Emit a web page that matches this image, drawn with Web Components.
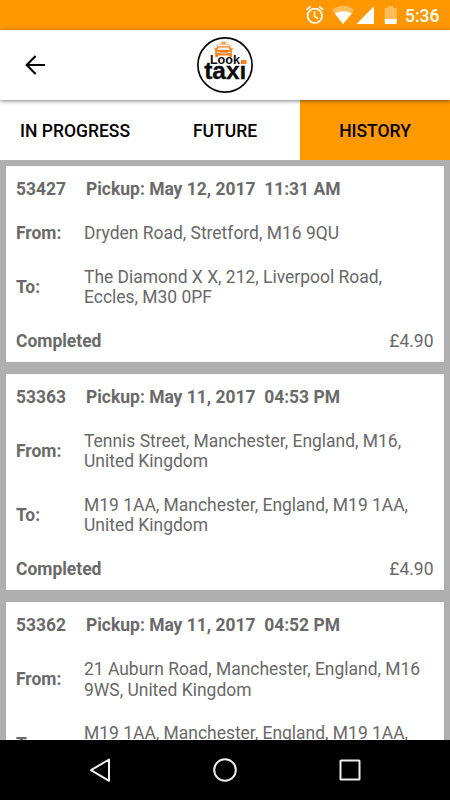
<!DOCTYPE html>
<html lang="en">
<head>
<meta charset="utf-8">
<title>Look Taxi – History</title>
<style>
html, body { margin: 0; height: 100%; }
body { font-family: Roboto, "Liberation Sans", sans-serif; overflow: hidden; background: #000; }
</style>
</head>
<body>
<taxi-app></taxi-app>
<script>
function define(name, html) {
  const t = document.createElement('template');
  t.innerHTML = html;
  customElements.define(name, class extends HTMLElement {
    constructor() {
      super();
      this.attachShadow({ mode: 'open' }).append(t.content.cloneNode(true));
    }
  });
}

define('status-bar', `
<style>
:host { display: flex; height: 30px; background: #ff9800; color: #fff; align-items: center; justify-content: flex-end; padding-right: 10px; box-sizing: border-box; }
svg { display: block; width: 102px; height: 30px; }
span { font-size: 17.5px; font-weight: 500; line-height: 30px; padding-top: 1px; width: 35px; height: 30px; box-sizing: border-box; white-space: nowrap; }
</style>
<svg viewBox="303 0 102 30" fill="#fff">
  <g fill="none" stroke="#fff" stroke-width="1.7">
    <circle cx="314.8" cy="15.8" r="7.2"/>
    <path d="M306.4 9.9l4-3.3M323.2 9.9l-4-3.3"/>
    <path d="M314.5 11.5v4.8l3.6 2.3" stroke-width="1.5"/>
  </g>
  <path d="M343 24L332 10q11-8.400 22.300 0z" opacity=".35"/>
  <path d="M343 24L334.800 13.500q8.300-4.500 16.900 0z"/>
  <path d="M356.500 24L374 6.200V24z"/>
  <path d="M384.700 19V8.700q0-1 1-1h2.300V6h5.300v1.700h2.400q1 0 1 1V19z" opacity=".35"/>
  <path d="M384.700 19h12v4q0 1-1 1h-10q-1 0-1-1z"/>
</svg>
<span>5:36</span>`);

define('taxi-logo', `
<style>
:host { display: block; width: 56px; height: 56px; }
svg { display: block; }
text { font-family: "Liberation Sans", Arial, sans-serif; font-weight: bold; fill: #0a0a0a; }
</style>
<svg width="56" height="56" viewBox="197 37 56 56">
  <circle cx="225" cy="65" r="27.100" fill="#fff" stroke="#0a0a0a" stroke-width="1.700"/>
  <path d="M215.800 46.200q3-2 5.400-2h5q2.400 0 5.400 2" fill="none" stroke="#f9a15a" stroke-width=".8"/>
  <path d="M220.200 42.200l1.600 1.300M225.600 43.500l1.600-1.300M222.500 42h2.600v1.800h-2.600z" fill="#f9a15a" stroke="#f98a30" stroke-width=".7"/>
  <path fill="#f9801d" d="M214.300 48.200h2l1-1.900h12.600l1 1.900h2v1l-1 .8v7h-2.600v-1.500h-11.200v1.500h-2.900V50l-.9-.8z"/>
  <path d="M217.300 49.800l1.200-2.200h10.200l1.200 2.200z" fill="#fff"/>
  <path d="M216.800 51.700h2.700v1.200h-2.700zM228 51.700h2.700v1.200H228zM220.300 52.700h7v.8h-7z" fill="#fff"/>
  <text x="209.900" y="64.200" font-size="12.600">Look</text>
  <text x="204.200" y="79" font-size="24.500" stroke="#0a0a0a" stroke-width=".3">taxi</text>
  <rect x="241.200" y="60" width="5.200" height="4" fill="#f9801d"/>
</svg>`);

define('app-bar', `
<style>
:host { display: grid; grid-template-columns: 1fr auto 1fr; align-items: center; height: 70px; background: #fff; box-shadow: 0 1px 4px rgba(0,0,0,.5); position: relative; z-index: 1; }
svg { display: block; margin-left: 24px; }
</style>
<svg width="22" height="22" viewBox="24 54 22 22" fill="none" stroke="#000" stroke-width="2.100"><path d="M45 65H27.500M35.600 56.100L26.700 65L35.600 73.900"/></svg>
<taxi-logo></taxi-logo>`);

define('tab-item', `
<style>
:host { display: flex; align-items: center; justify-content: center; background: #fff; color: #000; font-size: 17.500px; font-weight: 500; padding-top: 1px; }
:host([selected]) { background: #ff9900; }
</style>
<span><slot></slot></span>`);

define('tab-bar', `
<style>:host { display: grid; grid-template-columns: repeat(3, 1fr); height: 60px; }</style>
<slot></slot>`);

define('booking-card', `
<style>
:host { display: flex; flex-direction: column; gap: 23.300px; padding: 12.800px 10.500px 10.500px 10px; background: #fff; color: #686868; font-size: 17.470px; line-height: 20.500px; box-shadow: 0 0 1px rgba(0,0,0,.15); }
.row { display: grid; grid-template-columns: 68px 1fr; align-items: center; }
.head { display: flex; }
.id { width: 70px; }
.foot { display: flex; justify-content: space-between; }
b, .head { font-weight: 700; color: #6a6a6a; white-space: pre; }
</style>
<div class="head"><span class="id"><slot name="id"></slot></span><span><slot name="pickup"></slot></span></div>
<div class="row"><b>From:</b><span><slot name="from"></slot></span></div>
<div class="row"><b>To:</b><span><slot name="to"></slot></span></div>
<div class="foot"><b>Completed</b><span><slot name="fare"></slot></span></div>`);

define('booking-list', `
<style>
:host { display: flex; flex-direction: column; gap: 12.200px; padding: 6.200px 6px 0; background: #afafaf; flex: 1; min-height: 0; overflow: hidden; }
::slotted(*) { flex: none; }
</style>
<slot></slot>`);

define('nav-bar', `
<style>
:host { display: block; height: 60px; background: #000; }
svg { display: block; }
</style>
<svg width="450" height="60" viewBox="0 740 450 60" fill="none" stroke="#eee" stroke-width="2" stroke-linejoin="round">
  <path d="M109 759.500V780.800L91 770.200z"/>
  <circle cx="225" cy="770" r="10.800"/>
  <rect x="340.500" y="760.500" width="19" height="19" rx=".5"/>
</svg>`);

define('taxi-app', `
<style>
:host { display: flex; flex-direction: column; width: 450px; height: 800px; }
status-bar, app-bar, tab-bar, nav-bar { flex: none; }
.pre { white-space: pre; }
</style>
<status-bar></status-bar>
<app-bar></app-bar>
<tab-bar><tab-item>IN PROGRESS</tab-item><tab-item>FUTURE</tab-item><tab-item selected>HISTORY</tab-item></tab-bar>
<booking-list>
  <booking-card>
    <span slot="id">53427</span><span slot="pickup" class="pre">Pickup: May 12, 2017  11:31 AM</span>
    <span slot="from">Dryden Road, Stretford, M16 9QU</span>
    <span slot="to">The Diamond X X, 212, Liverpool Road, Eccles, M30 0PF</span>
    <span slot="fare">£4.90</span>
  </booking-card>
  <booking-card>
    <span slot="id">53363</span><span slot="pickup" class="pre">Pickup: May 11, 2017  04:53 PM</span>
    <span slot="from">Tennis Street, Manchester, England, M16, United Kingdom</span>
    <span slot="to">M19 1AA, Manchester, England, M19 1AA, United Kingdom</span>
    <span slot="fare">£4.90</span>
  </booking-card>
  <booking-card>
    <span slot="id">53362</span><span slot="pickup" class="pre">Pickup: May 11, 2017  04:52 PM</span>
    <span slot="from">21 Auburn Road, Manchester, England, M16 9WS, United Kingdom</span>
    <span slot="to">M19 1AA, Manchester, England, M19 1AA, United Kingdom</span>
    <span slot="fare">£4.90</span>
  </booking-card>
</booking-list>
<nav-bar></nav-bar>`);
</script>
</body>
</html>
